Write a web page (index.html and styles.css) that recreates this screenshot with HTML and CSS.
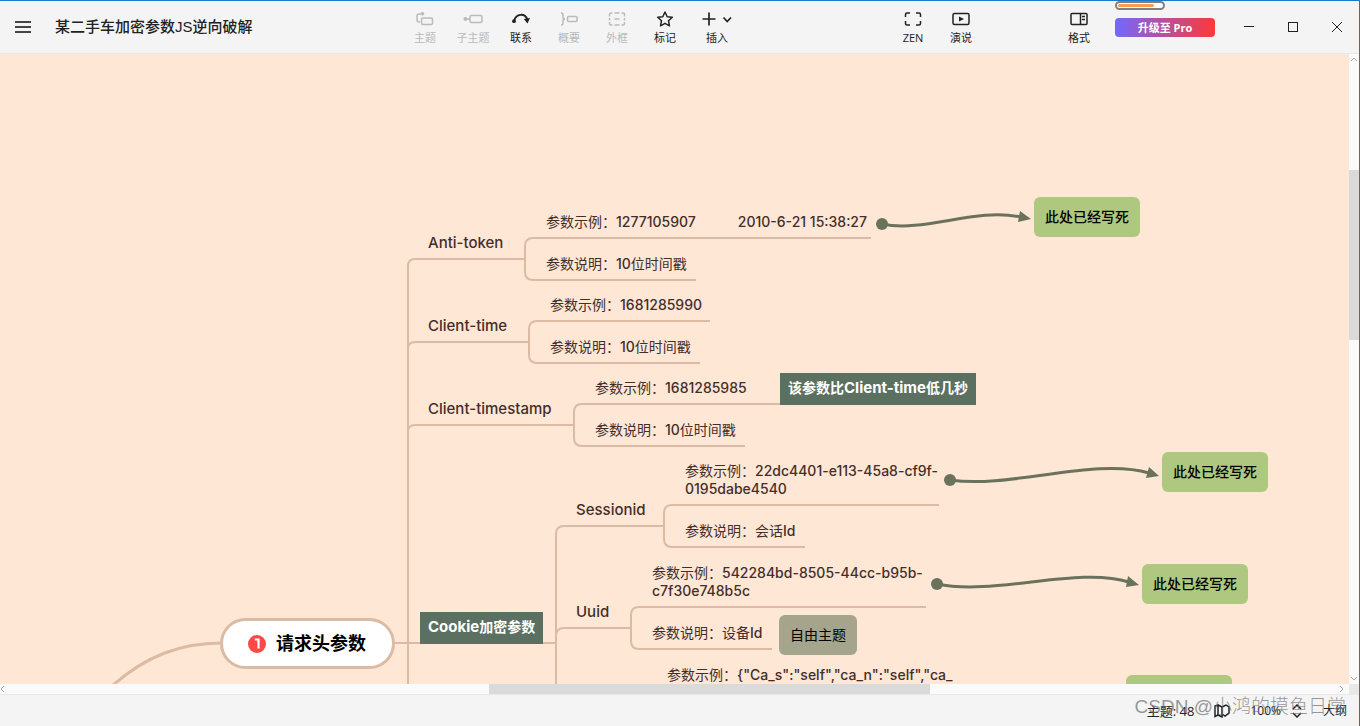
FILE: index.html
```html
<!DOCTYPE html>
<html lang="zh-CN">
<head>
<meta charset="utf-8">
<title>某二手车加密参数JS逆向破解</title>
<link rel="stylesheet" href="styles.css">
</head>
<body>
<div class="window">
  <header class="titlebar">
    <div class="title-left">
      <button class="menu-btn" aria-label="菜单"><svg width="16" height="14" viewBox="0 0 16 14" fill="none" stroke="#444" stroke-width="2"><path d="M0 2H16M0 7H16M0 12H16"/></svg></button>
      <h1 class="doc-title">某二手车加密参数JS逆向破解</h1>
    </div>
    <nav class="tools">
      <button class="tool" disabled><svg width="18" height="16" viewBox="0 0 18 16" fill="none" stroke="currentColor" stroke-width="1.500"><rect x="5.500" y="7" width="11" height="6.500" rx="1.500"/><path d="M4 11H3Q1 11 1 9V5Q1 3 3 3H6"/><circle cx="6.500" cy="2.800" r="1.800" fill="currentColor" stroke="none"/></svg><span>主题</span></button>
      <button class="tool" disabled><svg width="20" height="16" viewBox="0 0 20 16" fill="none" stroke="currentColor" stroke-width="1.500"><rect x="7" y="4.500" width="12" height="7" rx="1.500"/><path d="M2 8H7"/><circle cx="2.500" cy="8" r="2" fill="currentColor" stroke="none"/></svg><span>子主题</span></button>
      <button class="tool"><svg width="20" height="16" viewBox="0 0 20 16" fill="none" stroke="currentColor" stroke-width="2"><path d="M3 10C5 2.500 14 1.500 16.500 9"/><circle cx="3" cy="10.200" r="1.900" fill="currentColor" stroke="none"/><path d="M12.800 8L19 7L16.500 12.500Z" fill="currentColor" stroke="none"/></svg><span>联系</span></button>
      <button class="tool" disabled><svg width="18" height="16" viewBox="0 0 18 16" fill="none" stroke="currentColor" stroke-width="1.500"><path d="M1 2Q3 2 3 4V6.500Q3 8 5 8Q3 8 3 9.500V12Q3 14 1 14"/><rect x="7.500" y="5.500" width="9.500" height="5" rx="1"/></svg><span>概要</span></button>
      <button class="tool" disabled><svg width="18" height="16" viewBox="0 0 18 16" fill="none" stroke="currentColor" stroke-width="1.500"><path d="M4.500 2H3Q1.500 2 1.500 3.500V5.500M1.500 7V9.500M1.500 11V12.500Q1.500 14 3 14H4.500M6.500 14H11.500M13.500 14H15Q16.500 14 16.500 12.500V11M16.500 9.500V7M16.500 5.500V3.500Q16.500 2 15 2H13.500M11.500 2H6.500M6.500 8H11.500"/></svg><span>外框</span></button>
      <button class="tool"><svg width="18" height="16" viewBox="0 0 18 16" fill="none" stroke="currentColor" stroke-width="1.500" stroke-linejoin="round"><path d="M9 1L11.200 5.700L16.300 6.300L12.500 9.800L13.500 14.800L9 12.300L4.500 14.800L5.500 9.800L1.700 6.300L6.800 5.700Z"/></svg><span>标记</span></button>
      <button class="tool insert"><svg width="30" height="16" viewBox="0 0 30 16" fill="none" stroke="currentColor" stroke-width="1.700"><path d="M7 1.500V14.500M.5 8H13.500M21.500 6.500L25.200 10.500L29 6.500"/></svg><span>插入</span></button>
    </nav>
    <nav class="tools right">
      <button class="tool"><svg width="18" height="16" viewBox="0 0 18 16" fill="none" stroke="currentColor" stroke-width="1.500"><path d="M6 2H3Q1.500 2 1.500 3.500V6M1.500 10V12.500Q1.500 14 3 14H6M12 14H15Q16.500 14 16.500 12.500V10M16.500 6V3.500Q16.500 2 15 2H12"/></svg><span>ZEN</span></button>
      <button class="tool"><svg width="18" height="16" viewBox="0 0 18 16" fill="none" stroke="currentColor" stroke-width="1.500"><rect x="1" y="2.500" width="16" height="11" rx="1.500"/><path d="M7 5.500L12 8L7 10.500Z" fill="currentColor" stroke="none"/></svg><span>演说</span></button>
    </nav>
    <nav class="tools format">
      <button class="tool"><svg width="18" height="16" viewBox="0 0 18 16" fill="none" stroke="currentColor" stroke-width="1.500"><rect x="1" y="2.500" width="16" height="11" rx="1"/><path d="M10.500 2.500V13.500M12 5.500H15M12 8.500H15"/></svg><span>格式</span></button>
    </nav>
    <div class="upgrade">
      <button class="pro">升级至 Pro</button>
      <span class="battery"><i></i></span>
    </div>
    <div class="win-controls">
      <button aria-label="最小化"><svg width="12" height="12" viewBox="0 0 12 12" stroke="#222" fill="none"><path d="M1 5.500H11"/></svg></button>
      <button aria-label="最大化"><svg width="12" height="12" viewBox="0 0 12 12" stroke="#222" fill="none"><rect x="1.500" y="1.500" width="9" height="9"/></svg></button>
      <button aria-label="关闭"><svg width="12" height="12" viewBox="0 0 12 12" stroke="#222" fill="none"><path d="M1 1L11 11M11 1L1 11"/></svg></button>
    </div>
  </header>

  <main class="workspace">
    <div class="board">
      <svg class="links" fill="none" stroke="#dcbba5" stroke-width="2">
        <path stroke-width="3" d="M112 632C146 602 180 589 222 589"/>
        <path d="M394 589H421M541 589H556"/>
        <path d="M408 640V212Q408 205 415 205H525M408 295Q408 288 415 288H529M408 378Q408 371 415 371H574"/>
        <path d="M871 184H533Q525 184 525 192V218Q525 226 533 226H696"/>
        <path d="M710 267H537Q529 267 529 275V301Q529 309 537 309H700"/>
        <path d="M781 350H582Q574 350 574 358V384Q574 392 582 392H745"/>
        <path d="M556 640V480Q556 472 564 472H664M556 582Q556 574 564 574H631"/>
        <path d="M939 451H672Q664 451 664 459V485Q664 493 672 493H805"/>
        <path d="M926 553H639Q631 553 631 561V587Q631 595 639 595H772"/>
        <g stroke="#6b725c" stroke-width="3">
          <path d="M882 170C925 179 975 153 1021 163M950 426C1010 435 1095 403 1149 419M937 530C995 542 1078 512 1129 528"/>
          <g fill="#6b725c" stroke="none">
            <circle cx="882" cy="170" r="6"/><circle cx="950" cy="426" r="6"/><circle cx="937" cy="530" r="6"/>
            <path d="M1020 157L1031 165L1018 168ZM1149 413L1159 422L1146 424ZM1128 522L1139 531L1126 533Z"/>
          </g>
        </g>
      </svg>

      <div class="root-topic"><svg width="18" height="18" viewBox="0 0 18 18"><circle cx="9" cy="9" r="9" fill="#ff4848"/><path d="M6.800 4.500H10.500V13.500" fill="none" stroke="#fff" stroke-width="2.200"/></svg><span>请求头参数</span></div>

      <div class="topic label anti-token">Anti-token</div>
      <div class="topic anti-sample"><span>参数示例：<b>1277105907</b></span><b>2010-6-21 15:38:27</b></div>
      <div class="topic anti-note">参数说明：<b>10</b>位时间戳</div>

      <div class="topic label client-time">Client-time</div>
      <div class="topic time-sample">参数示例：<b>1681285990</b></div>
      <div class="topic time-note">参数说明：<b>10</b>位时间戳</div>

      <div class="topic label client-stamp">Client-timestamp</div>
      <div class="topic stamp-sample">参数示例：<b>1681285985</b></div>
      <div class="topic stamp-note">参数说明：<b>10</b>位时间戳</div>
      <div class="tag stamp-tag">该参数比<b>Client-time</b>低几秒</div>

      <div class="tag cookie-tag"><b>Cookie</b>加密参数</div>

      <div class="topic label session">Sessionid</div>
      <div class="topic session-sample">参数示例：<b>22dc4401-e113-45a8-cf9f-<br>0195dabe4540</b></div>
      <div class="topic session-note">参数说明：会话<b>Id</b></div>

      <div class="topic label uuid">Uuid</div>
      <div class="topic uuid-sample">参数示例：<b>542284bd-8505-44cc-b95b-<br>c7f30e748b5c</b></div>
      <div class="topic uuid-note">参数说明：设备<b>Id</b></div>
      <div class="floating free-topic">自由主题</div>

      <div class="topic ca-sample">参数示例：<b>{"Ca_s":"self","ca_n":"self","ca_</b></div>

      <div class="floating fixed-a">此处已经写死</div>
      <div class="floating fixed-b">此处已经写死</div>
      <div class="floating fixed-c">此处已经写死</div>
      <div class="floating fixed-d"></div>
    </div>
    <div class="vscroll">
      <svg width="8" height="10" viewBox="0 0 8 10" fill="none" stroke="#aaa"><path d="M1 7L4 4L7 7"/></svg>
      <div class="vtrack"><i></i><b></b><i></i></div>
      <svg width="8" height="10" viewBox="0 0 8 10" fill="none" stroke="#aaa"><path d="M1 3L4 6L7 3"/></svg>
    </div>
    <div class="hscroll">
      <svg width="10" height="8" viewBox="0 0 10 8" fill="none" stroke="#aaa"><path d="M4 1L1 4L4 7"/></svg>
      <div class="htrack"><i></i><b></b><i></i></div>
      <svg width="10" height="8" viewBox="0 0 10 8" fill="none" stroke="#aaa"><path d="M1 1L4 4L1 7"/></svg>
    </div>
    <div class="corner"></div>
  </main>

  <footer class="statusbar">
    <span class="count">主题: 48</span>
    <button class="map" aria-label="导航图"><svg width="16" height="14" viewBox="0 0 16 14" fill="none" stroke="#222" stroke-width="1.500"><path d="M1 2L4 1V11L1 12.500ZM4 1L8 3V13L4 11M8 3L12 1L15 3V9L11 12L8 10"/></svg></button>
    <button class="zoom-level">100%<svg width="10" height="14" viewBox="0 0 10 14" fill="none" stroke="#222" stroke-width="1.500"><path d="M1 5L5 1L9 5M1 9L5 13L9 9"/></svg></button>
    <button class="outline">大纲</button>
    <span class="watermark">CSDN @小鸿的摸鱼日常</span>
  </footer>
</div>
</body>
</html>
```
FILE: styles.css
```css
* { box-sizing: border-box; }
body {
  margin: 0;
  font-family: "Open Sans", "Noto Sans CJK SC", sans-serif;
  color: #222;
}
h1 { margin: 0; }
button {
  border: 0;
  padding: 0;
  background: none;
  color: inherit;
  font: inherit;
}
svg { display: block; flex: none; }

.window {
  display: flex;
  flex-direction: column;
  height: 100vh;
  overflow: hidden;
  background: #f4f4f4;
  border-top: 1px solid #1979ca;
  border-right: 1px solid #1979ca;
}

/* title bar */
.titlebar {
  display: flex;
  height: 53px;
  flex: none;
  border-bottom: 1px solid #e8e8e8;
}
.title-left {
  display: flex;
  align-items: center;
  gap: 24px;
  width: 401px;
  padding-left: 15px;
}
.doc-title {
  font-family: "Liberation Sans", "Noto Sans CJK SC", sans-serif;
  font-size: 15px;
  font-weight: 500;
  line-height: 20px;
}
.tools { display: flex; }
.tools.right { margin-left: auto; margin-right: 70px; }
.tools.format { margin-right: 12px; }
.tool {
  display: flex;
  flex-direction: column;
  align-items: center;
  gap: 3px;
  width: 48px;
  padding-top: 10px;
  font-size: 11px;
  line-height: 16px;
}
.tool:disabled { color: #bababa; }
.tool.insert { width: 56px; }

.upgrade { position: relative; padding-top: 17px; width: 100px; margin-right: 12px; }
.pro {
  display: block;
  width: 100%;
  height: 19px;
  border-radius: 4px;
  background: linear-gradient(90deg, #7168ff, #ff3838);
  color: #fff;
  font-size: 11px;
  font-weight: 700;
  line-height: 19px;
}
.battery {
  position: absolute;
  top: 0;
  left: 0;
  width: 50px;
  height: 9px;
  padding: 1px;
  border: 2px solid #808080;
  border-radius: 5px;
  background: #fff;
}
.battery i {
  display: block;
  width: 36px;
  height: 3px;
  border-radius: 2px;
  background: #ff9d4d;
}
.win-controls { display: flex; align-items: center; }
.win-controls button { display: flex; justify-content: center; width: 44px; }

/* canvas and scrollbars */
.workspace {
  flex: 1;
  min-height: 0;
  display: grid;
  grid-template: 1fr 10px / 1fr 10px;
}
.board {
  position: relative;
  overflow: hidden;
  background: #ffe7d6;
  font-family: "Inter", "Noto Sans CJK SC", sans-serif;
  font-size: 14px;
  line-height: 18px;
}
.links { position: absolute; inset: 0; width: 100%; height: 100%; }

.vscroll, .hscroll {
  display: flex;
  align-items: center;
  background: #fafafa;
}
.vscroll { flex-direction: column; }
.vtrack { display: flex; flex-direction: column; flex: 1; width: 100%; }
.htrack { display: flex; flex: 1; height: 100%; }
.vtrack b, .htrack b { background: #dadada; }
.vtrack b { flex: 170; }
.vtrack i:first-child { flex: 106; }
.vtrack i:last-child { flex: 334; }
.htrack b { flex: 441; }
.htrack i:first-child { flex: 479; }
.htrack i:last-child { flex: 409; }
.corner { background: #e8e8e8; }

/* topics */
.topic {
  position: absolute;
  white-space: nowrap;
  color: #432e2a;
}
.topic b { font-weight: 500; }
.label { font-size: 15px; font-weight: 500; }
.anti-token { left: 428px; top: 180px; }
.anti-sample { left: 546px; top: 159px; display: flex; gap: 42px; }
.anti-note { left: 546px; top: 201px; }
.client-time { left: 428px; top: 263px; }
.time-sample { left: 550px; top: 242px; }
.time-note { left: 550px; top: 284px; }
.client-stamp { left: 428px; top: 346px; }
.stamp-sample { left: 595px; top: 325px; }
.stamp-note { left: 595px; top: 367px; }
.session { left: 576px; top: 447px; }
.session-sample { left: 685px; top: 408px; }
.session-note { left: 685px; top: 468px; }
.uuid { left: 576px; top: 549px; }
.uuid-sample { left: 652px; top: 510px; }
.uuid-note { left: 652px; top: 570px; }
.ca-sample { left: 667px; top: 612px; }

.tag {
  position: absolute;
  padding: 6px 8px 8px;
  background: #5b7060;
  color: #fff;
  font-weight: 700;
  white-space: nowrap;
}
.tag b { font-size: 15px; font-weight: 700; }
.stamp-tag { left: 780px; top: 319px; }
.cookie-tag { left: 420px; top: 558px; }

.floating {
  position: absolute;
  min-width: 106px;
  min-height: 40px;
  padding: 11px;
  border-radius: 6px;
  background: #aec97f;
  color: #000;
  font-weight: 500;
  white-space: nowrap;
}
.fixed-a { left: 1034px; top: 143px; }
.fixed-b { left: 1162px; top: 398px; }
.fixed-c { left: 1142px; top: 510px; }
.fixed-d { left: 1126px; top: 621px; }
.free-topic {
  left: 779px;
  top: 561px;
  min-width: 78px;
  background: #a4a58c;
  font-weight: 400;
}

.root-topic {
  position: absolute;
  left: 220px;
  top: 564px;
  display: flex;
  align-items: center;
  gap: 10px;
  height: 51px;
  padding: 0 26px 0 25px;
  border: 3px solid #dcbba5;
  border-radius: 26px;
  background: #fff;
  color: #000;
  font-size: 18px;
  font-weight: 700;
  white-space: nowrap;
}

/* status bar */
.statusbar {
  position: relative;
  display: flex;
  align-items: center;
  justify-content: flex-end;
  height: 32px;
  flex: none;
  padding-right: 12px;
  border-top: 1px solid #e8e8e8;
  font-size: 12px;
  line-height: 18px;
}
.count { font-size: 13px; }
.map { margin-left: 20px; }
.zoom-level { display: flex; align-items: center; gap: 11px; margin-left: 20px; }
.outline { margin-left: 21px; }
.watermark {
  position: absolute;
  right: 13px;
  top: 0;
  color: rgba(110, 110, 110, 0.7);
  font-family: "Liberation Sans", "Noto Sans CJK SC", sans-serif;
  font-size: 19px;
  font-weight: 300;
  line-height: 24px;
  white-space: nowrap;
}
```
